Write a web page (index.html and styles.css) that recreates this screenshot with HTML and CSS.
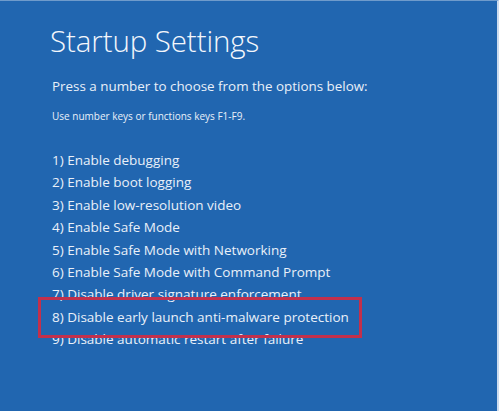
FILE: index.html
```html
<!DOCTYPE html>
<html>
<head>
<meta charset="utf-8">
<link rel="stylesheet" href="styles.css">
</head>
<body>
<div class="screen">
  <h1 class="title">Startup Settings</h1>
  <p class="prompt">Press a number to choose from the options below:</p>
  <p class="hint">Use number keys or functions keys F1-F9.</p>
  <ol class="options">
    <li>1) Enable debugging</li>
    <li>2) Enable boot logging</li>
    <li>3) Enable low-resolution video</li>
    <li>4) Enable Safe Mode</li>
    <li>5) Enable Safe Mode with Networking</li>
    <li>6) Enable Safe Mode with Command Prompt</li>
    <li>7) Disable driver signature enforcement</li>
    <li class="highlight">8) Disable early launch anti-malware protection</li>
    <li>9) Disable automatic restart after failure</li>
  </ol>
</div>
</body>
</html>
```
FILE: styles.css
```css
html, body {
  margin: 0;
  padding: 0;
}
body {
  width: 499px;
  height: 411px;
  overflow: hidden;
}
.screen {
  box-sizing: border-box;
  width: 499px;
  height: 411px;
  background: #2166b0;
  border-top: 1px solid #6f9bcb;
  border-right: 2px solid #cddcef;
  padding: 20px 0 0 50px;
  font-family: "Open Sans", "Noto Sans", sans-serif;
  color: #e9f0f9;
}
.title {
  margin: 0;
  font-size: 29.5px;
  font-weight: 300;
  line-height: 40px;
  color: #f4f7fc;
  letter-spacing: -0.1px;
}
.prompt {
  margin: 15px 0 0 2px;
  font-size: 13.4px;
  font-weight: 400;
  line-height: 20px;
}
.hint {
  margin: 13px 0 0 2px;
  font-size: 10px;
  line-height: 14px;
}
.options {
  list-style: none;
  margin: 26px 0 0 2px;
  padding: 0;
  font-size: 13.5px;
  line-height: 22.4px;
}
.highlight {
  position: relative;
}
.highlight::after {
  content: "";
  position: absolute;
  left: -14px;
  top: -9px;
  width: 318px;
  height: 35px;
  border: 3px solid #c2304c;
}
```
